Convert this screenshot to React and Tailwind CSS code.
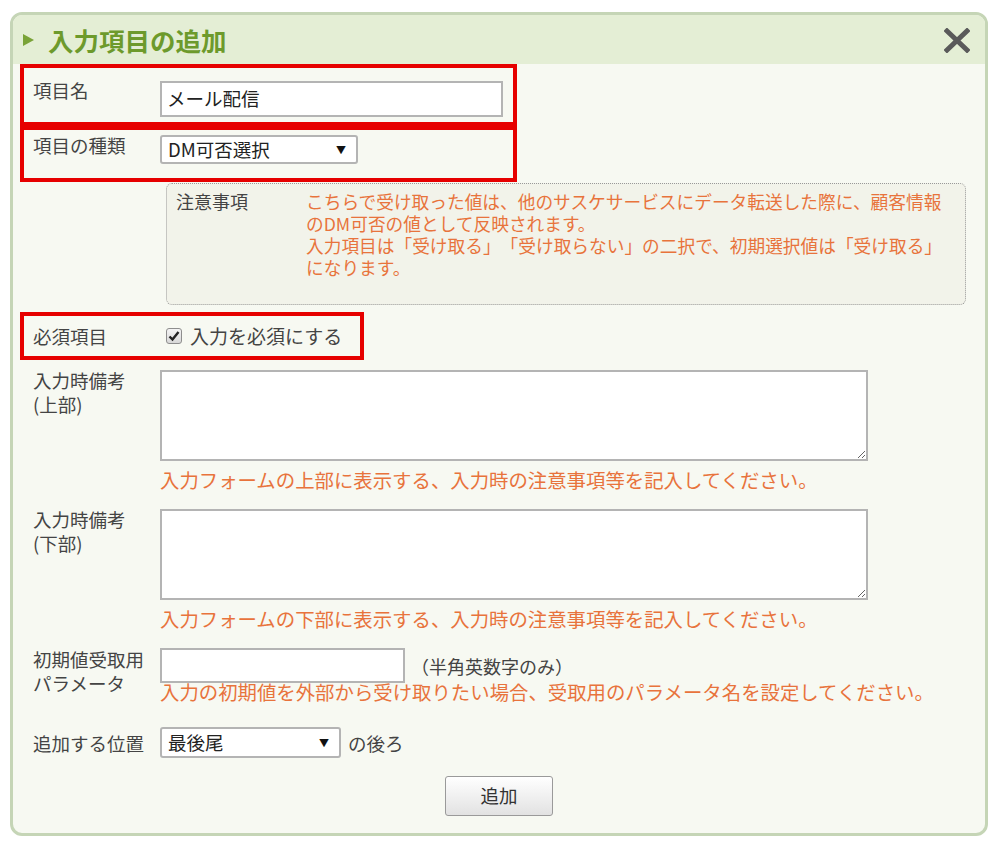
import React from 'react';

const FONT = { fontFamily: '"Noto Sans CJK JP", "Noto Sans", sans-serif' };

function Triangle() {
  return (
    <svg width="12" height="12" viewBox="0 0 12 12">
      <polygon points="1,0 12,6 1,12" fill="#7aa338" />
    </svg>
  );
}

function CloseIcon() {
  return (
    <svg width="26" height="25" viewBox="0 0 26 25">
      <path d="M3 3 L23 22 M23 3 L3 22" stroke="#5a5a5a" strokeWidth="5" strokeLinecap="square" />
    </svg>
  );
}

function FakeSelect({ value, width, height }) {
  return (
    <div
      className="flex items-center justify-between bg-white border-2 border-[#b4b4b4] rounded-[3px] pl-[6px] pr-[10px] text-[18.5px] text-[#222]"
      style={{ width, height }}
    >
      <span className="leading-none">{value}</span>
      <span className="text-[10px] leading-none text-[#111]">▼</span>
    </div>
  );
}

function Hint({ children, className = '' }) {
  return (
    <p className={`text-[19.4px] leading-[24px] text-[#e8733c] whitespace-nowrap ${className}`}>
      {children}
    </p>
  );
}

export default function App() {
  return (
    <div className="w-[1000px] h-[845px] bg-white pt-[12px] pl-[10px] [text-spacing-trim:space-all]" style={FONT}>
      <div className="w-[978px] h-[824px] border-[3px] border-[#c5d5b6] rounded-[12px] overflow-hidden bg-[#f7f9f2] flex flex-col">
        {/* header */}
        <div className="h-[49px] shrink-0 bg-[#e4eed5] flex items-center pl-[9px] pr-[15px]">
          <Triangle />
          <h1 className="ml-[14px] text-[25.5px] font-bold leading-none text-[#6d9a2c]">入力項目の追加</h1>
          <div className="ml-auto pt-[2px]">
            <CloseIcon />
          </div>
        </div>

        {/* body */}
        <div className="flex flex-col text-[#444]">
          {/* 項目名 */}
          <div className="ml-[7px] w-[497px] h-[62px] border-4 border-[#e60000] flex items-start pl-[9px]">
            <div className="w-[127px] pt-[10px] text-[18.5px] leading-[24px]">項目名</div>
            <div className="mt-[13px] w-[343px] h-[36px] bg-white border-2 border-[#b4b4b4] flex items-center pl-[5px] text-[18.5px] text-[#222]">
              メール配信
            </div>
          </div>

          {/* 項目の種類 */}
          <div className="ml-[7px] w-[497px] h-[56px] border-4 border-[#e60000] flex items-start pl-[9px]">
            <div className="w-[127px] pt-[3px] text-[18.5px] leading-[24px]">項目の種類</div>
            <div className="mt-[5px]">
              <FakeSelect value="DM可否選択" width={198} height={29} />
            </div>
          </div>

          {/* 注意事項 */}
          <div className="mt-[1px] ml-[153px] w-[800px] h-[122px] border border-dotted border-[#999] rounded-[6px] bg-[#f2f3ea] flex items-start pl-[9px] pt-[6px]">
            <div className="w-[130px] text-[18px] leading-[22px] text-[#444]">注意事項</div>
            <p className="text-[17.7px] leading-[22px] text-[#e8733c] whitespace-nowrap">
              こちらで受け取った値は、他のサスケサービスにデータ転送した際に、顧客情報
              <br />
              のDM可否の値として反映されます。
              <br />
              入力項目は「受け取る」「受け取らない」の二択で、初期選択値は「受け取る」
              <br />
              になります。
            </p>
          </div>

          {/* 必須項目 */}
          <div className="mt-[7px] ml-[7px] w-[344px] h-[48px] border-4 border-[#e60000] flex items-center pl-[9px]">
            <div className="w-[127px] text-[18.5px] leading-[24px]">必須項目</div>
            <div className="flex items-center ml-[6px]">
              <span className="w-[16px] h-[16px] rounded-[3px] border border-[#8e8e8e] bg-gradient-to-b from-[#f4f4f4] to-[#d8d8d8] flex items-center justify-center">
                <svg width="12" height="12" viewBox="0 0 12 12">
                  <path d="M1.5 6.5 L4.5 9.5 L10.5 2" stroke="#222" strokeWidth="2.4" fill="none" />
                </svg>
              </span>
              <span className="ml-[8px] text-[19px] leading-[24px] text-[#444]">入力を必須にする</span>
            </div>
          </div>

          {/* 入力時備考(上部) */}
          <div className="mt-[8px] flex items-start pl-[20px]">
            <div className="w-[127px] text-[18.5px] leading-[24px]">
              入力時備考
              <br />
              (上部)
            </div>
            <div className="flex flex-col">
              <textarea className="mt-[2px] w-[708px] h-[91px] bg-white border-2 border-[#b4b4b4] outline-none" />
              <Hint className="mt-[7px]">入力フォームの上部に表示する、入力時の注意事項等を記入してください。</Hint>
            </div>
          </div>

          {/* 入力時備考(下部) */}
          <div className="mt-[15px] flex items-start pl-[20px]">
            <div className="w-[127px] text-[18.5px] leading-[24px]">
              入力時備考
              <br />
              (下部)
            </div>
            <div className="flex flex-col">
              <textarea className="mt-[2px] w-[708px] h-[91px] bg-white border-2 border-[#b4b4b4] outline-none" />
              <Hint className="mt-[7px]">入力フォームの下部に表示する、入力時の注意事項等を記入してください。</Hint>
            </div>
          </div>

          {/* 初期値受取用パラメータ */}
          <div className="mt-[16px] flex items-start pl-[20px]">
            <div className="w-[127px] text-[18.5px] leading-[24px]">
              初期値受取用
              <br />
              パラメータ
            </div>
            <div className="flex flex-col">
              <div className="flex items-center mt-[1px]">
                <div className="w-[245px] h-[35px] bg-white border-2 border-[#b4b4b4]" />
                <span className="ml-[6px] text-[18px] leading-[24px] text-[#444]">（半角英数字のみ）</span>
              </div>
              <Hint className="mt-[-3px]">入力の初期値を外部から受け取りたい場合、受取用のパラメータ名を設定してください。</Hint>
            </div>
          </div>

          {/* 追加する位置 */}
          <div className="mt-[23px] flex items-center pl-[20px]">
            <div className="w-[127px] text-[18.5px] leading-[24px]">追加する位置</div>
            <FakeSelect value="最後尾" width={181} height={31} />
            <span className="ml-[7px] text-[18.5px] leading-[24px] text-[#444]">の後ろ</span>
          </div>

          {/* button */}
          <div className="mt-[18px] flex justify-center">
            <button className="w-[108px] h-[40px] border border-[#9a9a9a] rounded-[3px] bg-gradient-to-b from-[#ffffff] to-[#e2e2e2] text-[18.5px] text-[#333]">
              追加
            </button>
          </div>
        </div>
      </div>
    </div>
  );
}
